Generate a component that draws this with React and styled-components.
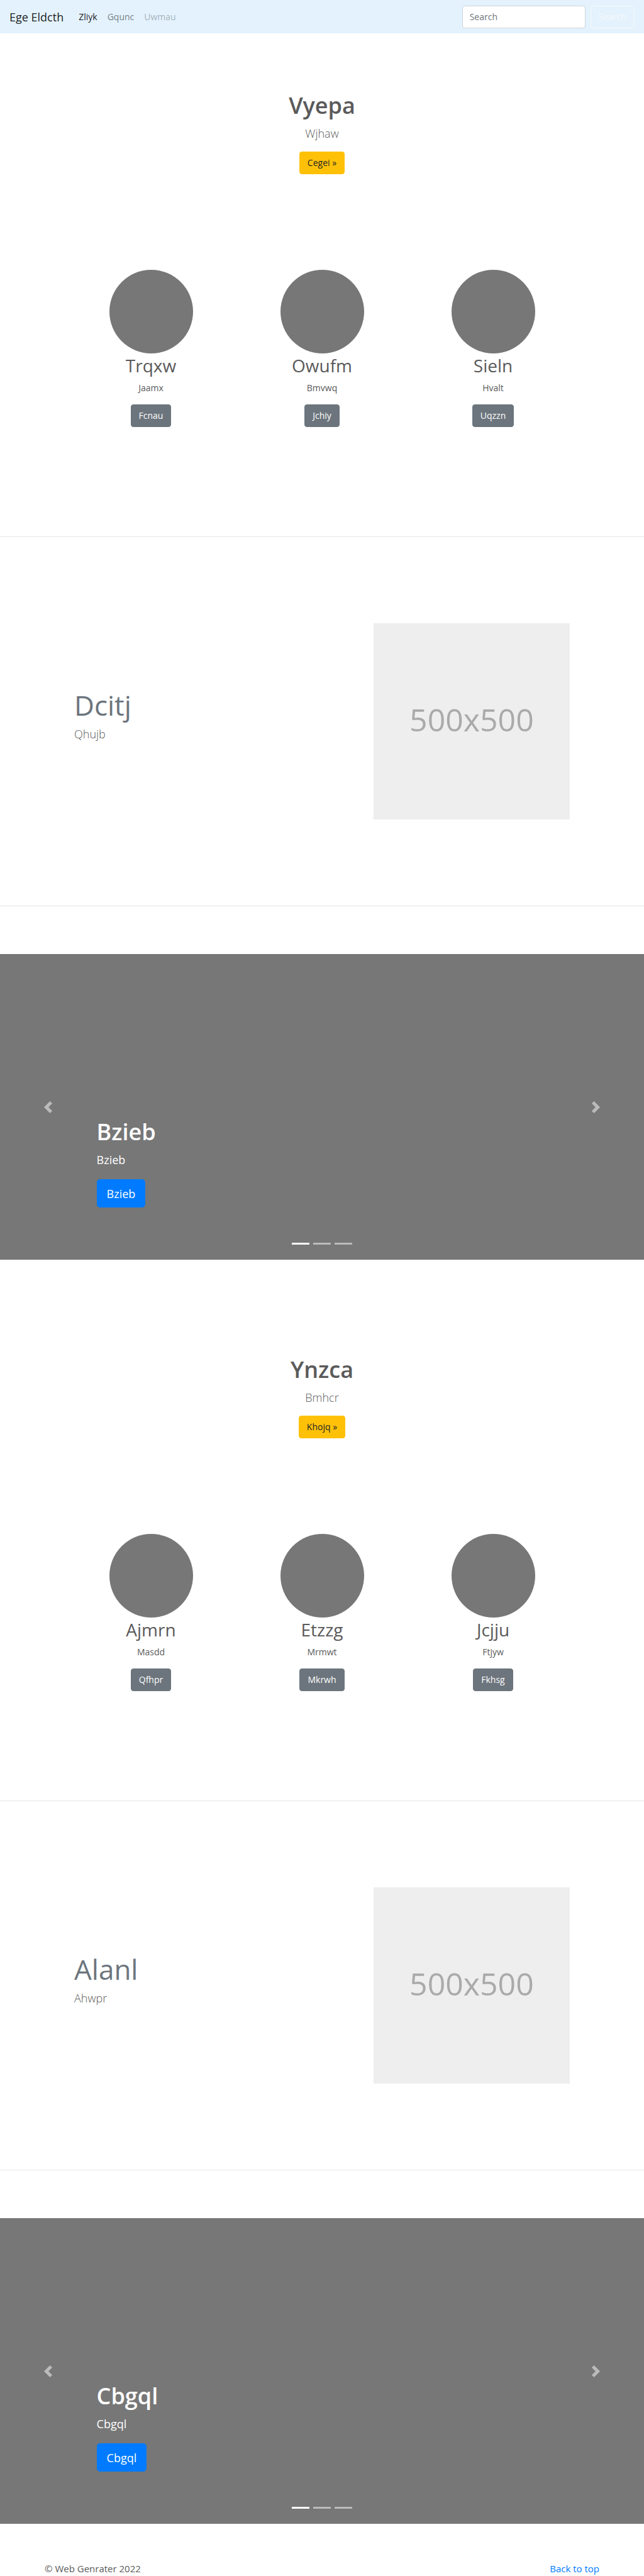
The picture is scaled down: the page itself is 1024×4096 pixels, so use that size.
import React from "react";
import styled, { createGlobalStyle } from "styled-components";

const GlobalStyle = createGlobalStyle`
  *, *::before, *::after { box-sizing: border-box; }
  body {
    margin: 0;
    background: #fff;
    color: #5a5a5a;
    font: 400 15px/22px "Open Sans", "Noto Sans", sans-serif;
  }
  h1, h2, p, ul, ol, figure { margin: 0; padding: 0; }
  ul, ol { list-style: none; }
  a { text-decoration: none; }
  button, input { font: inherit; margin: 0; }
`;

const Navbar = styled.nav`
  display: flex;
  align-items: center;
  justify-content: space-between;
  height: 53px;
  padding: 0 15px;
  background: #e3f2fd;
`;

const NavStart = styled.div`
  display: flex;
  align-items: center;
  gap: 16px;
`;

const Brand = styled.a`
  font-size: 18px;
  line-height: 28px;
  color: rgba(0, 0, 0, 0.9);
`;

const NavList = styled.ul`
  display: flex;
`;

const NavLink = styled.a`
  display: block;
  padding: 0 8px;
  font-size: 14px;
  color: ${({ $tone }) =>
    ({ active: "rgba(0,0,0,.9)", normal: "rgba(0,0,0,.5)", disabled: "rgba(0,0,0,.3)" })[$tone]};
`;

const SearchForm = styled.form`
  display: flex;
  gap: 8px;
`;

const SearchInput = styled.input`
  width: 196px;
  height: 36px;
  padding: 0 11px;
  border: 1px solid #ced4da;
  border-radius: 4px;
  background: #fff;
  color: #495057;
  font-size: 14px;
  &::placeholder { color: #6c757d; opacity: 1; }
`;

const variants = {
  warning: ["#ffc107", "#212529", "#ffc107"],
  secondary: ["#6c757d", "#fff", "#6c757d"],
  primary: ["#007bff", "#fff", "#007bff"],
  outline: ["transparent", "#f8f9fa", "#f8f9fa"],
};

const Button = styled.button`
  display: inline-flex;
  align-items: center;
  justify-content: center;
  height: ${({ $large }) => ($large ? 45 : 36)}px;
  padding: 0 ${({ $large }) => ($large ? 15 : 12)}px;
  border: 1px solid ${({ $variant }) => variants[$variant][2]};
  border-radius: ${({ $large }) => ($large ? 5 : 4)}px;
  background: ${({ $variant }) => variants[$variant][0]};
  color: ${({ $variant }) => variants[$variant][1]};
  font-size: ${({ $large }) => ($large ? 18 : 14)}px;
  cursor: pointer;
`;

const Hero = styled.header`
  display: flex;
  flex-direction: column;
  align-items: center;
  padding: 92px 15px 152px;
`;

const Title = styled.h1`
  font-size: 36px;
  line-height: 46px;
  font-weight: 600;
`;

const Lead = styled.p`
  font-size: 18px;
  line-height: 28px;
  font-weight: 300;
`;

const HeroLead = styled(Lead)`
  margin: 7px 0 15px;
`;

const Features = styled.section`
  display: grid;
  grid-template-columns: repeat(3, 1fr);
  max-width: 816px;
  margin: 0 auto 174px;
`;

const Feature = styled.article`
  display: flex;
  flex-direction: column;
  align-items: center;
`;

const Avatar = styled.div`
  width: 133px;
  height: 133px;
  border-radius: 50%;
  background: #777;
`;

const FeatureTitle = styled.h2`
  font-size: 28px;
  line-height: 38px;
  font-weight: 400;
`;

const FeatureText = styled.p`
  margin: 6px 0 15px;
  font-size: 14px;
`;

const Divider = styled.hr`
  height: 1px;
  margin: 0;
  border: 0;
  background: #e5e5e5;
`;

const Featurette = styled.section`
  display: grid;
  grid-template-columns: 7fr 5fr;
  gap: 39px;
  max-width: 788px;
  margin: 137px auto;
`;

const FeaturetteText = styled.div`
  padding-top: 106px;
`;

const FeaturetteTitle = styled.h2`
  margin-bottom: 8px;
  font-size: 44px;
  line-height: 48px;
  font-weight: 400;
  color: #6c757d;
`;

const Placeholder = styled.figure`
  display: flex;
  align-items: center;
  justify-content: center;
  height: 312px;
  padding-bottom: 6px;
  background: #eee;
  color: #aaa;
  font-size: 50px;
  line-height: 60px;
`;

const Carousel = styled.section`
  position: relative;
  display: grid;
  grid-template-columns: 15% 1fr 15%;
  height: 486px;
  margin: 76px 0 60px;
  background: #777;
  color: #fff;
`;

const Arrow = styled.button`
  display: flex;
  align-items: center;
  justify-content: center;
  border: 0;
  background: none;
  color: #fff;
  opacity: 0.5;
  cursor: pointer;
`;

const Caption = styled.div`
  align-self: end;
  padding-bottom: 83px;
`;

const CaptionText = styled.p`
  margin: 7px 0 17px;
  font-size: 18px;
  line-height: 28px;
`;

const Indicators = styled.ol`
  position: absolute;
  left: 0;
  right: 0;
  bottom: 24px;
  display: flex;
  justify-content: center;
  gap: 6px;
`;

const Indicator = styled.li`
  width: 28px;
  height: 3px;
  background: #fff;
  opacity: ${({ $active }) => ($active ? 1 : 0.5)};
`;

const Footer = styled.footer`
  display: flex;
  justify-content: space-between;
  padding: 0 71px;
  line-height: 23px;
`;

const TopLink = styled.a`
  color: #007bff;
`;

const blocks = [
  {
    title: "Vyepa", lead: "Wjhaw", action: "Cegei »",
    features: [["Trqxw", "Jaamx", "Fcnau"], ["Owufm", "Bmvwq", "Jchiy"], ["Sieln", "Hvalt", "Uqzzn"]],
    featurette: ["Dcitj", "Qhujb"],
    slide: "Bzieb",
  },
  {
    title: "Ynzca", lead: "Bmhcr", action: "Khojq »",
    features: [["Ajmrn", "Masdd", "Qfhpr"], ["Etzzg", "Mrmwt", "Mkrwh"], ["Jcjju", "Ftjyw", "Fkhsg"]],
    featurette: ["Alanl", "Ahwpr"],
    slide: "Cbgql",
  },
];

function Chevron({ next }) {
  return (
    <svg width="19" height="19" viewBox="0 0 8 8" fill="currentColor" aria-hidden="true">
      <path d={next
        ? "M2.75 0l-1.5 1.5 2.5 2.5-2.5 2.5 1.5 1.5 4-4-4-4z"
        : "M5.25 0l-4 4 4 4 1.5-1.5-2.5-2.5 2.5-2.5-1.5-1.5z"} />
    </svg>
  );
}

function Block({ title, lead, action, features, featurette, slide }) {
  return (
    <>
      <Hero>
        <Title>{title}</Title>
        <HeroLead>{lead}</HeroLead>
        <Button type="button" $variant="warning">{action}</Button>
      </Hero>
      <Features>
        {features.map(([name, text, label]) => (
          <Feature key={name}>
            <Avatar />
            <FeatureTitle>{name}</FeatureTitle>
            <FeatureText>{text}</FeatureText>
            <Button type="button" $variant="secondary">{label}</Button>
          </Feature>
        ))}
      </Features>
      <Divider />
      <Featurette>
        <FeaturetteText>
          <FeaturetteTitle>{featurette[0]}</FeaturetteTitle>
          <Lead>{featurette[1]}</Lead>
        </FeaturetteText>
        <Placeholder>500x500</Placeholder>
      </Featurette>
      <Divider />
      <Carousel>
        <Arrow type="button" aria-label="Previous"><Chevron /></Arrow>
        <Caption>
          <Title>{slide}</Title>
          <CaptionText>{slide}</CaptionText>
          <Button type="button" $variant="primary" $large>{slide}</Button>
        </Caption>
        <Arrow type="button" aria-label="Next"><Chevron next /></Arrow>
        <Indicators>
          <Indicator $active />
          <Indicator />
          <Indicator />
        </Indicators>
      </Carousel>
    </>
  );
}

export default function App() {
  return (
    <>
      <GlobalStyle />
      <Navbar>
        <NavStart>
          <Brand href="#">Ege Eldcth</Brand>
          <NavList>
            <li><NavLink href="#" $tone="active">Zliyk</NavLink></li>
            <li><NavLink href="#" $tone="normal">Gqunc</NavLink></li>
            <li><NavLink href="#" $tone="disabled">Uwmau</NavLink></li>
          </NavList>
        </NavStart>
        <SearchForm>
          <SearchInput type="search" placeholder="Search" aria-label="Search" />
          <Button type="button" $variant="outline">Search</Button>
        </SearchForm>
      </Navbar>
      <main>
        {blocks.map((block) => <Block key={block.title} {...block} />)}
      </main>
      <Footer>
        <p>© Web Genrater 2022</p>
        <TopLink href="#">Back to top</TopLink>
      </Footer>
    </>
  );
}
